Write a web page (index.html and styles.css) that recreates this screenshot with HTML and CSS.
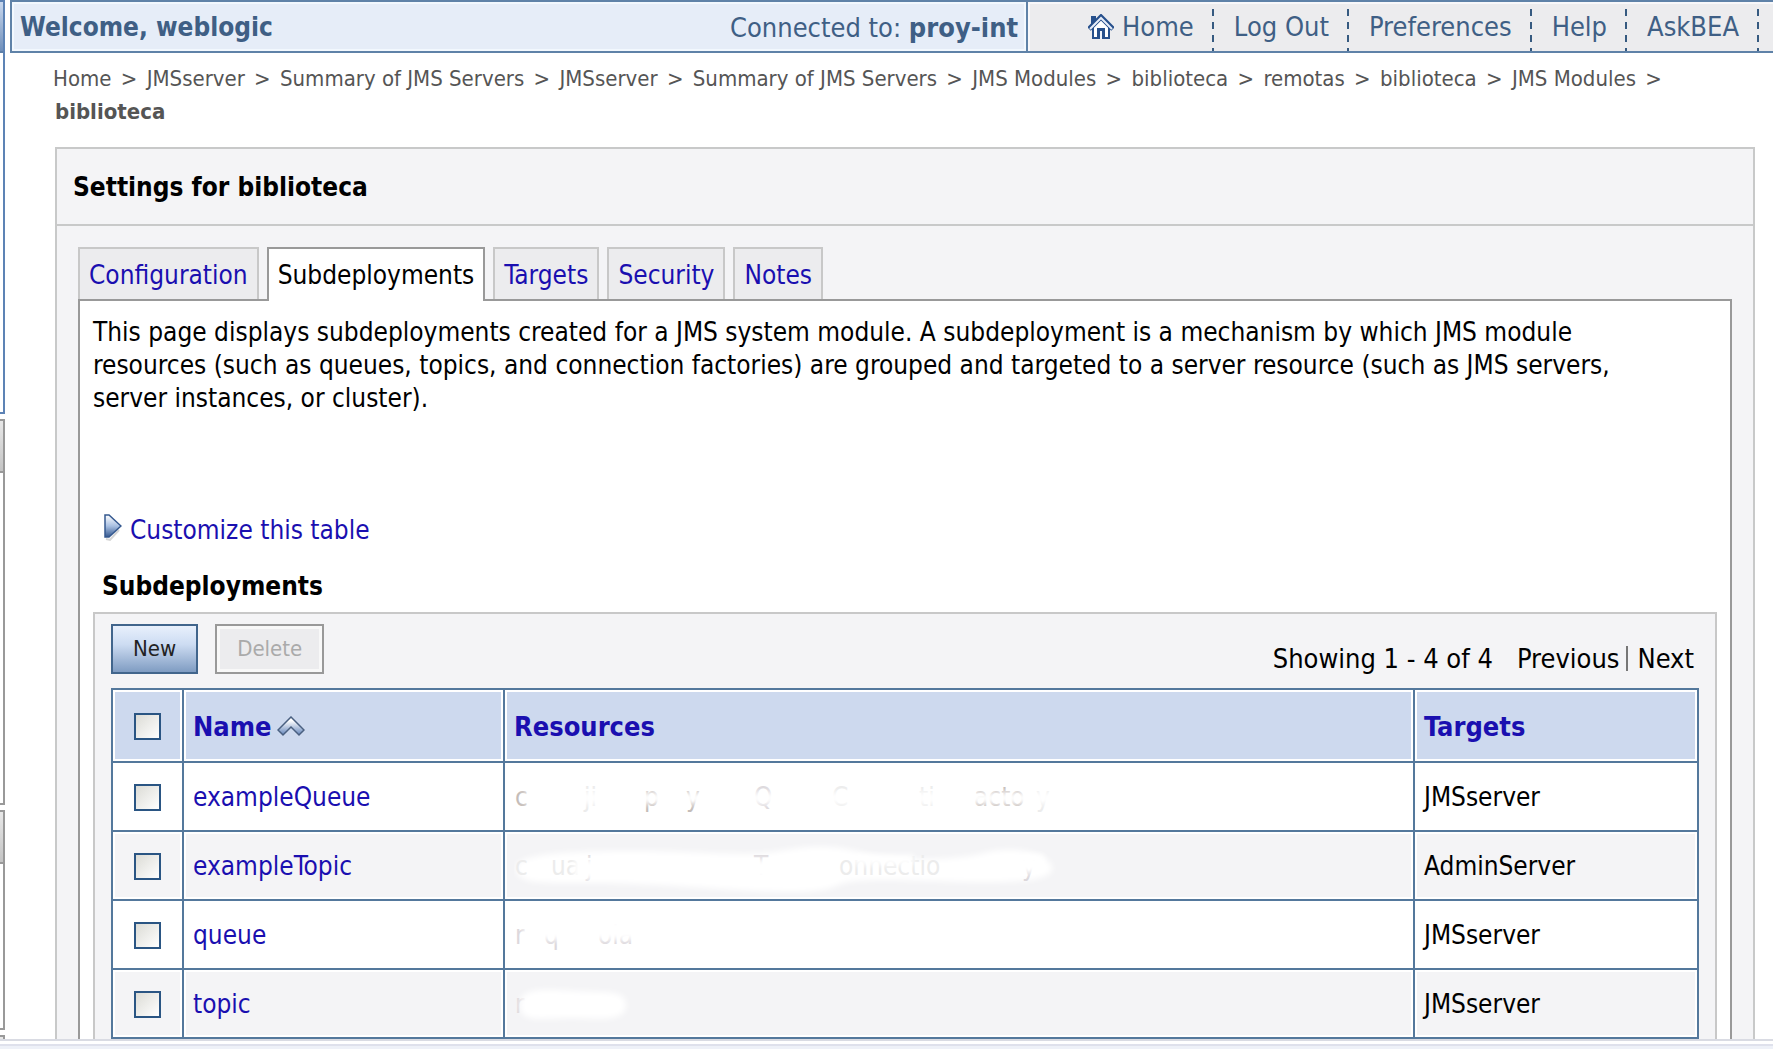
FILE: index.html
```html
<!DOCTYPE html>
<html lang="en">
<head>
<meta charset="utf-8">
<title>Settings for biblioteca</title>
<link rel="stylesheet" href="styles.css">
</head>
<body>
<div class="frame">
  <aside class="rail" aria-hidden="true">
    <div class="rail-box rail-first"></div>
    <div class="rail-box rail-tall"></div>
    <div class="rail-box rail-mid"></div>
    <div class="rail-box rail-last"></div>
  </aside>
  <main class="content">
    <header class="topbar">
      <div class="welcome">
        <strong>Welcome, weblogic</strong>
        <span class="connected">Connected to: <strong>proy-int</strong></span>
      </div>
      <nav class="toplinks">
        <a href="#"><svg class="home-icon" viewBox="0 0 26 26" width="26" height="26" aria-hidden="true">
          <path d="M3 2h5v8H3z" fill="#27508c"/>
          <path d="M5 13v11h6v-7h5v7h5V13l-8-8z" fill="#fff" stroke="#27508c" stroke-width="2"/>
          <path d="M9 14h8v11H9z" fill="#27508c"/><path d="M12 17h2v8h-2z" fill="#eef2fa"/>
          <path d="M1 15L13 3l12 12" fill="none" stroke="#27508c" stroke-width="5"/>
          <path d="M2 15L13 4l11 11" fill="none" stroke="#e6edf8" stroke-width="2"/>
        </svg>Home</a>
        <a href="#">Log Out</a>
        <a href="#">Preferences</a>
        <a href="#">Help</a>
        <a href="#">AskBEA</a>
      </nav>
    </header>

    <nav class="crumbs" aria-label="Breadcrumb">
      <a href="#">Home</a> <span>&gt;</span> <a href="#">JMSserver</a> <span>&gt;</span> <a href="#">Summary of JMS Servers</a> <span>&gt;</span> <a href="#">JMSserver</a> <span>&gt;</span> <a href="#">Summary of JMS Servers</a> <span>&gt;</span> <a href="#">JMS Modules</a> <span>&gt;</span> <a href="#">biblioteca</a> <span>&gt;</span> <a href="#">remotas</a> <span>&gt;</span> <a href="#">biblioteca</a> <span>&gt;</span> <a href="#">JMS Modules</a> <span>&gt;</span>
      <strong>biblioteca</strong>
    </nav>

    <section class="settings">
      <h1>Settings for biblioteca</h1>
      <div class="settings-body">
        <nav class="tabs">
          <a href="#">Configuration</a>
          <a href="#" class="active" aria-current="page">Subdeployments</a>
          <a href="#">Targets</a>
          <a href="#">Security</a>
          <a href="#">Notes</a>
        </nav>
        <div class="panel">
          <p class="intro">This page displays subdeployments created for a JMS system module. A subdeployment is a mechanism by which JMS module resources (such as queues, topics, and connection factories) are grouped and targeted to a server resource (such as JMS servers, server instances, or cluster).</p>
          <a class="customize" href="#"><svg viewBox="0 0 18 34" width="18" height="34" aria-hidden="true">
            <defs><linearGradient id="play" x1="0" y1="0" x2="0" y2="1"><stop offset="0" stop-color="#fff"/><stop offset=".5" stop-color="#a9c0e2"/><stop offset="1" stop-color="#34588f"/></linearGradient></defs>
            <path d="M2 26l4 1 9-10" fill="none" stroke="#d5d5d5" stroke-width="2"/>
            <path d="M1 2h4l12 11L5 24H1z" fill="url(#play)" stroke="#34588f" stroke-width="1.5"/>
          </svg>Customize this table</a>
          <h2>Subdeployments</h2>
          <div class="tablebox">
            <div class="toolbar">
              <button type="button" class="btn">New</button>
              <button type="button" class="btn" disabled>Delete</button>
              <div class="pager"><span class="showing">Showing 1 - 4 of 4</span><span>Previous</span><i></i><span>Next</span></div>
            </div>
            <table>
              <colgroup><col class="c-check"><col class="c-name"><col class="c-res"><col class="c-target"></colgroup>
              <thead>
                <tr>
                  <th><input type="checkbox" aria-label="Select all"></th>
                  <th><a href="#">Name<svg class="sort" viewBox="0 0 28 22" width="28" height="22" aria-hidden="true">
                    <defs><linearGradient id="chev" x1="0" y1="0" x2="0" y2="1"><stop offset=".2" stop-color="#fff"/><stop offset="1" stop-color="#6385bb"/></linearGradient></defs>
                    <path d="M14 1l13 13-5 5-8-8-8 8-5-5z" fill="url(#chev)" stroke="#4a6080" stroke-width="1.5"/>
                  </svg></a></th>
                  <th><a href="#">Resources</a></th>
                  <th><a href="#">Targets</a></th>
                </tr>
              </thead>
              <tbody>
                <tr>
                  <td><input type="checkbox" aria-label="Select exampleQueue"></td>
                  <td><a href="#">exampleQueue</a></td>
                  <td><svg class="wiped" viewBox="0 0 560 60" width="560" height="60" aria-hidden="true">
                    <text x="1" y="38" class="w3">c</text><text x="70" y="38" class="w1">ji</text><text x="130" y="38" class="w3">p</text><text x="172" y="38" class="w3">y</text><text x="240" y="38" class="w2">Q</text><text x="318" y="38" class="w1">C</text><text x="405" y="38" class="w1">ti</text><text x="460" y="38" class="w3">acto</text><text x="522" y="38" class="w1">y</text>
                    <path d="M10 24H540V36H10z" class="wipe"/>
                  </svg></td>
                  <td>JMSserver</td>
                </tr>
                <tr>
                  <td><input type="checkbox" aria-label="Select exampleTopic"></td>
                  <td><a href="#">exampleTopic</a></td>
                  <td><svg class="wiped" viewBox="0 0 560 60" width="560" height="60" aria-hidden="true">
                    <path d="M2 31C2 16 60 14 120 14S230 20 265 14 320 8 350 16 440 24 470 16 535 16 538 30 500 46 450 45 340 40 325 48 280 56 240 54 130 46 80 46 2 48 2 31z" class="wipe"/>
                    <text x="1" y="38" class="w1">c</text><text x="37" y="38" class="w1">ua</text><text x="72" y="38" class="w2">j</text><text x="240" y="38" class="w2">T</text><text x="325" y="38" class="w1">onnectio</text><text x="508" y="38" class="w2">y</text>
                    <path d="M60 22H320V42H60zM340 18H400V28H340zM480 18H530V36H480z" class="wipe"/>
                  </svg></td>
                  <td>AdminServer</td>
                </tr>
                <tr>
                  <td><input type="checkbox" aria-label="Select queue"></td>
                  <td><a href="#">queue</a></td>
                  <td><svg class="wiped" viewBox="0 0 560 60" width="560" height="60" aria-hidden="true">
                    <text x="1" y="38" class="w2">r</text><text x="30" y="38" class="w2">q</text><text x="84" y="38" class="w2">ola</text>
                    <path d="M10 14H130V34H10z" class="wipe"/>
                  </svg></td>
                  <td>JMSserver</td>
                </tr>
                <tr>
                  <td><input type="checkbox" aria-label="Select topic"></td>
                  <td><a href="#">topic</a></td>
                  <td><svg class="wiped" viewBox="0 0 560 60" width="560" height="60" aria-hidden="true">
                    <text x="1" y="38" class="w2">r</text>
                    <path d="M6 30C6 12 30 14 60 16S112 14 112 30 90 44 60 43 6 50 6 30z" class="wipe"/>
                  </svg></td>
                  <td>JMSserver</td>
                </tr>
              </tbody>
            </table>
          </div>
        </div>
      </div>
    </section>
  </main>
</div>
<footer class="status"></footer>
</body>
</html>
```
FILE: styles.css
```css
* { box-sizing: border-box; }
body {
  margin: 0;
  height: 100vh;
  display: flex;
  flex-direction: column;
  overflow: hidden;
  background: #fff;
  color: #000;
  font: 26px/33px "DejaVu Sans Condensed", "DejaVu Sans", sans-serif;
}
a { color: #1a0fb0; text-decoration: none; }
svg { flex: none; }
h1, h2, p { margin: 0; }

.frame { flex: 1; min-height: 0; display: flex; gap: 5px; overflow: hidden; }
.status { height: 10px; border-top: 2px solid #d9dbe3; background: linear-gradient(#fff 0 3px, #dfe1ec 3px 5px, #eef1f8 5px); }

.rail { width: 5px; display: flex; flex-direction: column; gap: 5px; }
.rail-box { border: 2px solid #999; border-left: 0; background: linear-gradient(#e8e8e8, #c4c4c4 50px, #999 50px 52px, #fff 52px); }
.rail-first { height: 414px; border-color: #5d83b5; background: linear-gradient(#c9d8ee, #6f8fba 49px, #5d7fa8 49px 51px, #fff 51px); }
.rail-tall { height: 386px; }
.rail-mid { height: 220px; }
.rail-last { flex: 1; border-bottom: 0; }

.content { flex: 1; min-width: 0; }
.topbar { display: flex; height: 53px; border: 2px solid #5f82a8; border-right: 0; background: #ececee; color: #3f5f85; line-height: 51px; }
.welcome { flex: 1; display: flex; justify-content: space-between; padding: 0 8px; background: #e6edf8; border-right: 2px solid #5f82a8; box-shadow: inset 0 0 0 2px #f2f8fe; }
.connected, .toplinks { font-size: 27px; }
.toplinks { display: flex; padding: 0 14px 0 40px; box-shadow: inset 2px 2px 0 #f8f8fa; }
.toplinks a { display: flex; align-items: center; gap: 8px; padding: 0 20px; color: #3f5f85; background: repeating-linear-gradient(#365a80 0 7px, transparent 7px 13px) right 7px / 2px 100% no-repeat; }

.crumbs { padding: 9px 90px 0 43px; font-size: 22px; color: #555; }
.crumbs a { color: #555; }
.crumbs span { margin: 0 3px; }
.crumbs strong { padding-left: 2px; }

.settings { margin: 19px 18px 0 45px; border: 2px solid #c8c9c9; background: #f4f4f6; }
h1 { padding: 22px 16px 20px; font-size: 26px; line-height: 33px; border-bottom: 2px solid #c8c9c9; }
.settings-body { padding: 21px 21px 0; }

.tabs { display: flex; gap: 8px; }
.tabs a { padding: 10px 9px 7px; line-height: 33px; border: 2px solid #c8c8c8; border-bottom: 0; background: #ececee; }
.tabs .active { position: relative; margin-bottom: -2px; background: #fff; color: #000; border-color: #999; }

.panel { padding: 15px 13px 0; border: 2px solid #999; border-bottom: 0; background: #fff; }
.intro { padding-right: 60px; }
.customize { display: flex; align-items: center; gap: 8px; margin-top: 98px; padding-left: 11px; }
h2 { margin-top: 23px; padding-left: 9px; font-size: 26px; line-height: 33px; }

.tablebox { margin-top: 9px; padding: 10px 16px 0; border: 2px solid #c8c8c8; border-bottom: 0; background: #f4f4f6; }
.toolbar { display: flex; gap: 17px; height: 64px; align-items: flex-start; }
.btn { height: 50px; padding: 0 20px; font: 22px/40px "DejaVu Sans Condensed", "DejaVu Sans", sans-serif; color: #222; border: 2px solid #41658c; background: linear-gradient(#e8f0fc, #cddcf2 40%, #7f9cc2); }
.btn:disabled { color: #aaa; border-color: #999; background: #ececee; box-shadow: inset 0 0 0 3px #f8f8f8; }
.pager { display: flex; align-items: center; margin: 18px 5px 0 auto; font-size: 27px; line-height: 33px; }
.showing { margin-right: 24px; }
.pager i { width: 2px; height: 25px; margin: 0 9px 0 7px; background: #777; }

table { width: 100%; table-layout: fixed; border-collapse: collapse; }
.c-check { width: 71px; }
.c-name { width: 321px; }
.c-target { width: 284px; }
th, td { padding: 2px 9px 0; height: 69px; text-align: left; border: 2px solid #54789c; background: #fff; box-shadow: inset 0 0 0 2px #fff; }
th { height: 73px; font-size: 27px; background: #cdd9ee; }
th a { display: flex; align-items: center; gap: 5px; }
td:first-child, th:first-child { padding: 2px 0 0; }
tbody tr:nth-child(even) td { background: #f4f4f6; }
input { appearance: none; display: block; width: 27px; height: 27px; margin: 0 auto; border: 2px solid #2a5583; background: linear-gradient(135deg, #dcdcd6, #fff); }
.wiped { display: block; overflow: hidden; }
.wipe { fill: #fff; filter: blur(3px); }
.w1 { fill: #ececec; }
.w2 { fill: #dcd8dc; }
.w3 { fill: #c4bcb8; }
```
